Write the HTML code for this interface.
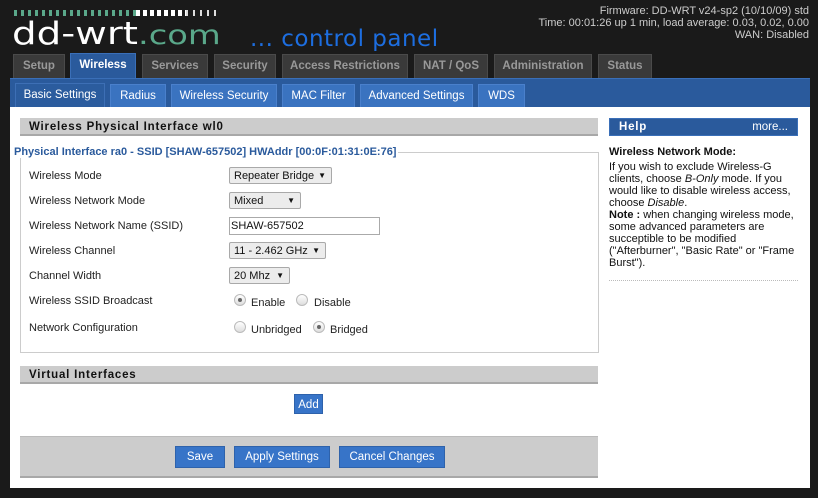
<!DOCTYPE html>
<html><head><meta charset="utf-8"><style>
*{margin:0;padding:0;box-sizing:border-box}
body{width:818px;height:498px;background:#1a1a1a;font-family:"Liberation Sans",sans-serif;position:relative;overflow:hidden}
.a{position:absolute}
.tab{position:absolute;top:54px;height:24px;background:#3a3a3a;border:1px solid #4a4a4a;border-bottom:none;color:#999;font-weight:bold;font-size:11.5px;text-align:center;line-height:23px}
.tab.on{background:#2a5a9c;border-color:#3a6fb8;color:#fff;top:53px;height:25px}
.st{position:absolute;top:84px;height:23px;background:#3a73c0;border:1px solid #4a80cc;border-bottom:none;color:#fff;font-size:11.5px;text-align:center;line-height:22px}
.st.on{background:#2b5c9e;border-color:#3d6fb5}
.hd{position:absolute;left:20px;width:578px;height:18px;background:#ccc;border-bottom:2px solid #a8a8a8;font-weight:bold;font-size:11.5px;letter-spacing:0.8px;color:#111;padding-left:9px;line-height:19px}
.lb{position:absolute;left:29px;font-size:11px;color:#222}
.sel{position:absolute;left:229px;height:17px;background:#ececec;border:1px solid #a9a9a9;border-radius:2px;font-size:11px;color:#111;padding-left:4px;line-height:16px}
.sel i{position:absolute;right:5px;top:0;font-style:normal;font-size:8px}
.rd{position:absolute;width:12px;height:12px;border-radius:50%;border:1px solid #bbb;background:linear-gradient(#fff,#ddd)}
.rd.on::after{content:"";position:absolute;left:3px;top:3px;width:4px;height:4px;border-radius:50%;background:#666}
.rt{position:absolute;font-size:11px;color:#222}
.btn{position:absolute;background:#3774c8;border:1px solid #2e62ab;color:#fff;font-size:11.5px;text-align:center;line-height:20px}
</style></head><body>
<div class="a" style="left:14px;top:10px;width:122px;height:6px;background:repeating-linear-gradient(90deg,#5aa88a 0 3px,transparent 3px 7px)"></div>
<div class="a" style="left:136px;top:10px;width:50px;height:6px;background:repeating-linear-gradient(90deg,#fff 0 4px,transparent 4px 7px)"></div>
<div class="a" style="left:186px;top:10px;width:34px;height:6px;background:repeating-linear-gradient(90deg,#ddd 0 2px,transparent 2px 7px)"></div>
<div class="a" style="left:12px;top:17px;font-size:31px;line-height:34px;color:#fff;font-family:'DejaVu Sans',sans-serif;font-weight:normal;transform:scaleX(1.25);transform-origin:0 0;white-space:nowrap">dd-wrt<span style="color:#5aa88a;font-size:27px">.com</span></div>
<div class="a" style="left:250px;top:26px;font-size:23px;color:#1d6ee0;font-family:'DejaVu Sans',sans-serif;letter-spacing:0.5px">... control panel</div>
<div class="a" style="right:9px;top:5px;text-align:right;color:#ccc;font-size:11px;line-height:12px">Firmware: DD-WRT v24-sp2 (10/10/09) std<br>Time: 00:01:26 up 1 min, load average: 0.03, 0.02, 0.00<br>WAN: Disabled</div>
<div class="tab" style="left:13px;width:52px">Setup</div>
<div class="tab on" style="left:70px;width:66px;color:#fff">Wireless</div>
<div class="tab" style="left:142px;width:66px">Services</div>
<div class="tab" style="left:214px;width:62px">Security</div>
<div class="tab" style="left:282px;width:126px">Access Restrictions</div>
<div class="tab" style="left:414px;width:74px">NAT / QoS</div>
<div class="tab" style="left:494px;width:98px">Administration</div>
<div class="tab" style="left:598px;width:54px">Status</div>
<div class="a" style="left:10px;top:78px;width:800px;height:29px;background:#2a5a9c;border-top:1px solid #3a6fb8"></div>
<div class="st on" style="left:15px;width:90px;top:83px;height:24px">Basic Settings</div>
<div class="st" style="left:110px;width:56px">Radius</div>
<div class="st" style="left:171px;width:106px">Wireless Security</div>
<div class="st" style="left:282px;width:73px">MAC Filter</div>
<div class="st" style="left:360px;width:113px">Advanced Settings</div>
<div class="st" style="left:478px;width:47px">WDS</div>
<div class="a" style="left:10px;top:107px;width:800px;height:381px;background:#fff"></div>
<div class="hd" style="top:118px">Wireless Physical Interface wl0</div>
<div class="a" style="left:20px;top:152px;width:579px;height:201px;border:1px solid #ccc"></div>
<div class="a" style="left:12px;top:146px;background:#fff;padding:0 2px;font-size:11px;font-weight:bold;color:#2a5a9c">Physical Interface ra0 - SSID [SHAW-657502] HWAddr [00:0F:01:31:0E:76]</div>
<div class="lb" style="top:170px">Wireless Mode</div>
<div class="lb" style="top:195px">Wireless Network Mode</div>
<div class="lb" style="top:220px">Wireless Network Name (SSID)</div>
<div class="lb" style="top:245px">Wireless Channel</div>
<div class="lb" style="top:270px">Channel Width</div>
<div class="lb" style="top:295px">Wireless SSID Broadcast</div>
<div class="lb" style="top:322px">Network Configuration</div>
<div class="sel" style="top:167px;width:103px">Repeater Bridge<i>▼</i></div>
<div class="sel" style="top:192px;width:72px">Mixed<i>▼</i></div>
<div class="a" style="left:229px;top:217px;width:151px;height:18px;border:1px solid #aaa;font-size:11px;line-height:16px;padding-left:1px;color:#111">SHAW-657502</div>
<div class="sel" style="top:242px;width:97px">11 - 2.462 GHz<i>▼</i></div>
<div class="sel" style="top:267px;width:61px">20 Mhz<i>▼</i></div>
<div class="rd on" style="left:234px;top:294px"></div><div class="rt" style="left:251px;top:297px">Enable</div>
<div class="rd" style="left:296px;top:294px"></div><div class="rt" style="left:314px;top:297px">Disable</div>
<div class="rd" style="left:234px;top:321px"></div><div class="rt" style="left:251px;top:324px">Unbridged</div>
<div class="rd on" style="left:313px;top:321px"></div><div class="rt" style="left:330px;top:324px">Bridged</div>
<div class="hd" style="top:366px">Virtual Interfaces</div>
<div class="btn" style="left:294px;top:394px;width:29px;height:20px">Add</div>
<div class="a" style="left:20px;top:436px;width:578px;height:42px;background:#ccc;border-top:1px solid #bbb;border-bottom:2px solid #a8a8a8"></div>
<div class="btn" style="left:175px;top:446px;width:50px;height:22px">Save</div>
<div class="btn" style="left:234px;top:446px;width:96px;height:22px">Apply Settings</div>
<div class="btn" style="left:339px;top:446px;width:106px;height:22px">Cancel Changes</div>
<div class="a" style="left:609px;top:118px;width:189px;height:18px;background:#2a5a9c;border:1px solid #3a6fb8;color:#fff;font-size:11.5px;line-height:17px;padding:0 9px"><b style="letter-spacing:0.8px">Help</b><span style="float:right">more...</span></div>
<div class="a" style="left:609px;top:146px;width:192px;font-size:11px;line-height:12px;color:#111"><b style="display:block;margin-bottom:3px">Wireless Network Mode:</b>If you wish to exclude Wireless-G clients, choose <i>B-Only</i> mode. If you would like to disable wireless access, choose <i>Disable</i>.<br><b>Note :</b> when changing wireless mode, some advanced parameters are succeptible to be modified ("Afterburner", "Basic Rate" or "Frame Burst").</div>
<div class="a" style="left:609px;top:280px;width:189px;border-top:1px dotted #bbb"></div>
</body></html>
